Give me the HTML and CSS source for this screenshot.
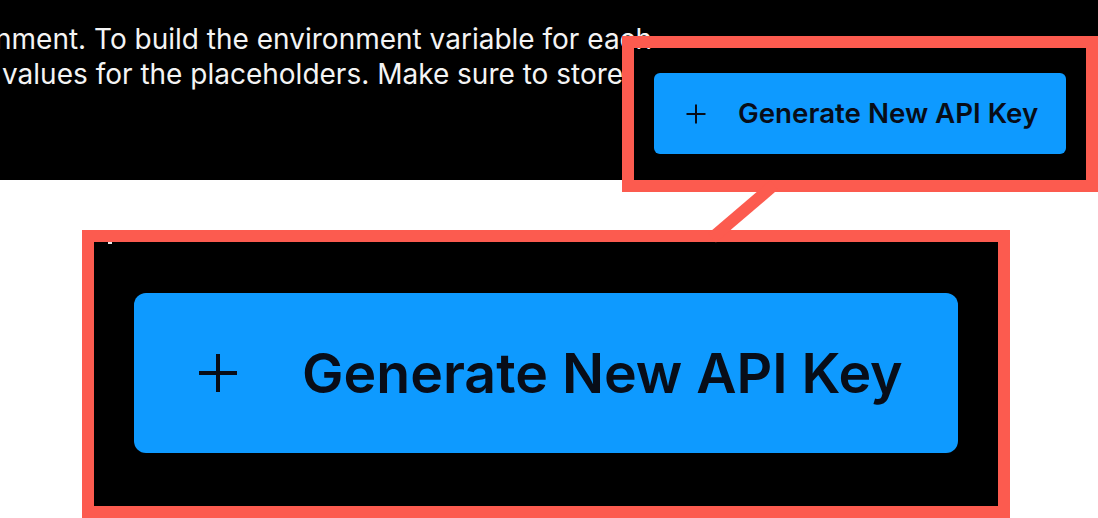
FILE: index.html
```html
<!DOCTYPE html>
<html lang="en">
<head>
<meta charset="utf-8">
<title>Generate New API Key</title>
<link rel="stylesheet" href="styles.css">
</head>
<body>
  <main class="page">
    <section class="shot">
      <div class="copy">
        <p class="line line-1">nment. To build the environment variable for each</p>
        <p class="line line-2">values for the placeholders. Make sure to store</p>
      </div>
      <button class="btn" type="button">
        <svg class="btn-icon" viewBox="0 0 20 20" aria-hidden="true"><path d="M10 0.5V19.5M0.5 10H19.5"/></svg>
        <span class="btn-label">Generate New API Key</span>
      </button>
    </section>

    <section class="zoom">
      <button class="btn btn--lg" type="button">
        <svg class="btn-icon" viewBox="0 0 20 20" aria-hidden="true"><path d="M10 0.5V19.5M0.5 10H19.5"/></svg>
        <span class="btn-label">Generate New API Key</span>
      </button>
    </section>

    <div class="callout" aria-hidden="true"></div>
    <svg class="connector" viewBox="0 0 1098 518" aria-hidden="true"><line x1="712" y1="238" x2="774" y2="185"/></svg>
  </main>
</body>
</html>
```

FILE: styles.css
```css
* { box-sizing: border-box; }

html, body {
  margin: 0;
  padding: 0;
  background: #ffffff;
}

.page {
  position: relative;
  width: 1098px;
  height: 518px;
  overflow: hidden;
  font-family: "Inter", "Noto Sans", "Liberation Sans", sans-serif;
}

.shot {
  display: flex;
  justify-content: space-between;
  align-items: flex-start;
  height: 180px;
  padding-right: 32px;
  background: #000000;
  overflow: hidden;
}

.copy {
  flex: 1 1 auto;
  min-width: 0;
  padding-top: 22px;
}

.line {
  margin: 0;
  color: #f4f4f4;
  font-size: 28px;
  line-height: 35px;
  font-weight: 400;
  white-space: nowrap;
}

.line-1 { margin-left: -5px; }
.line-2 { margin-left: 2px; }

.btn {
  flex: none;
  display: flex;
  align-items: center;
  gap: 32px;
  width: 412px;
  height: 81px;
  margin: 73px 0 0 0;
  padding: 0 0 0 32px;
  border: 0;
  border-radius: 6px;
  background: #0e9aff;
  color: #080d18;
  font-family: inherit;
  font-size: 27.7px;
  font-weight: 600;
  line-height: 1;
  white-space: nowrap;
  cursor: pointer;
}

.btn-icon {
  flex: none;
  width: 20px;
  height: 20px;
  fill: none;
  stroke: #080d18;
  stroke-width: 2;
}

.zoom {
  position: relative;
  width: 928px;
  height: 288px;
  margin: 50px 0 0 82px;
  padding: 39px 40px 0 40px;
  border: 12px solid #fc5b4f;
  background: #000000;
}

.zoom::before {
  content: "";
  position: absolute;
  left: 14px;
  top: 0;
  width: 4px;
  height: 2px;
  background: #e8e8e8;
}

.btn--lg {
  width: 824px;
  height: 160px;
  margin: 12px 0 0 0;
  padding-left: 64px;
  gap: 64px;
  border-radius: 12px;
  font-size: 55.4px;
}

.btn--lg .btn-icon {
  width: 40px;
  height: 40px;
}

.callout {
  position: absolute;
  left: 622px;
  top: 36px;
  width: 476px;
  height: 156px;
  border: 12px solid #fc5b4f;
  pointer-events: none;
}

.connector {
  position: absolute;
  left: 0;
  top: 0;
  width: 1098px;
  height: 518px;
  pointer-events: none;
}

.connector line {
  stroke: #fc5b4f;
  stroke-width: 12;
}
```
